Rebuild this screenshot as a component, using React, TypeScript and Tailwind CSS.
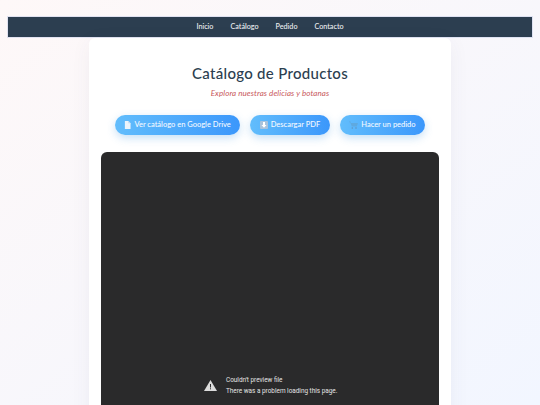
export default function App() {
  const btn = "flex items-center gap-[3px] h-5 px-[9.5px] whitespace-nowrap rounded-full bg-gradient-to-r from-[#62bdfc] to-[#3b97fb] text-[#f4f9ff] text-[7.5px] font-medium shadow-[0_3px_8px_rgba(66,153,225,0.3)]";
  return (
    <div className="h-[405px] overflow-hidden bg-gradient-to-br from-[#fef8f8] to-[#f2f6ff] pt-[17px] px-2 font-['Lato',sans-serif]">
      <nav className="h-5 bg-[#2c3e50] flex items-center justify-center gap-[17px] text-[7.2px] font-medium text-[#eef0f3] shadow-[0_0_0_1px_rgba(190,200,230,0.45)]">
        <span>Inicio</span>
        <span>Catálogo</span>
        <span>Pedido</span>
        <span>Contacto</span>
      </nav>
      <main className="mx-auto mt-px w-[362px] h-[400px] bg-white rounded-t-[6px] px-3 shadow-[0_4px_20px_rgba(60,70,110,0.06)]">
        <h1 className="pt-[25px] text-center text-[15px] leading-[20px] font-medium text-[#2c3e50] tracking-[0.3px]">Catálogo de Productos</h1>
        <p className="mt-[4px] text-center text-[8px] leading-[12px] italic font-normal text-[#c8585c] tracking-[0.1px]">Explora nuestras delicias y botanas</p>
        <div className="mt-[16px] flex justify-center gap-[10px]">
          <a className={btn}>
            <svg width="7" height="8" viewBox="0 0 8 9"><path d="M1 0h4l2.500 2.500V9H1z" fill="#eaf3fb" /><path d="M5 0v2.500h2.500z" fill="#b9d4ee" /></svg>
            <span>Ver catálogo en Google Drive</span>
          </a>
          <a className={btn}>
            <svg width="8" height="8" viewBox="0 0 8 8"><rect width="8" height="8" rx="1" fill="#a9c3dc" /><path d="M3 1h2v3h1.500L4 6.800 1.500 4H3z" fill="#fff" /></svg>
            <span>Descargar PDF</span>
          </a>
          <a className={btn}>
            <svg width="9" height="8" viewBox="0 0 9 8"><path d="M0 .5h1.500l.5 1.500h7L7.800 5.500H2.800L1.200 1.200H0z" fill="#5fa9df" /><circle cx="3.300" cy="7" r=".8" fill="#5f93bf" /><circle cx="7" cy="7" r=".8" fill="#5f93bf" /></svg>
            <span>Hacer un pedido</span>
          </a>
        </div>
        <div className="relative mt-[17px] h-[300px] bg-[#2a2a2b] rounded-[6px]">
          <div className="absolute left-[103px] top-[223px] flex items-center gap-[9px] text-[6.4px] text-[#e4e4e4] font-['Roboto',sans-serif]">
            <svg width="13" height="11" viewBox="0 0 13 11"><path d="M6.500 0L13 11H0z" fill="#dcdcdc" /><rect x="6" y="4" width="1" height="3.500" fill="#2a2a2b" /><rect x="6" y="8.300" width="1" height="1" fill="#2a2a2b" /></svg>
            <div className="leading-[10.5px]">
              <div>Couldn't preview file</div>
              <div>There was a problem loading this page.</div>
            </div>
          </div>
        </div>
      </main>
    </div>
  );
}
